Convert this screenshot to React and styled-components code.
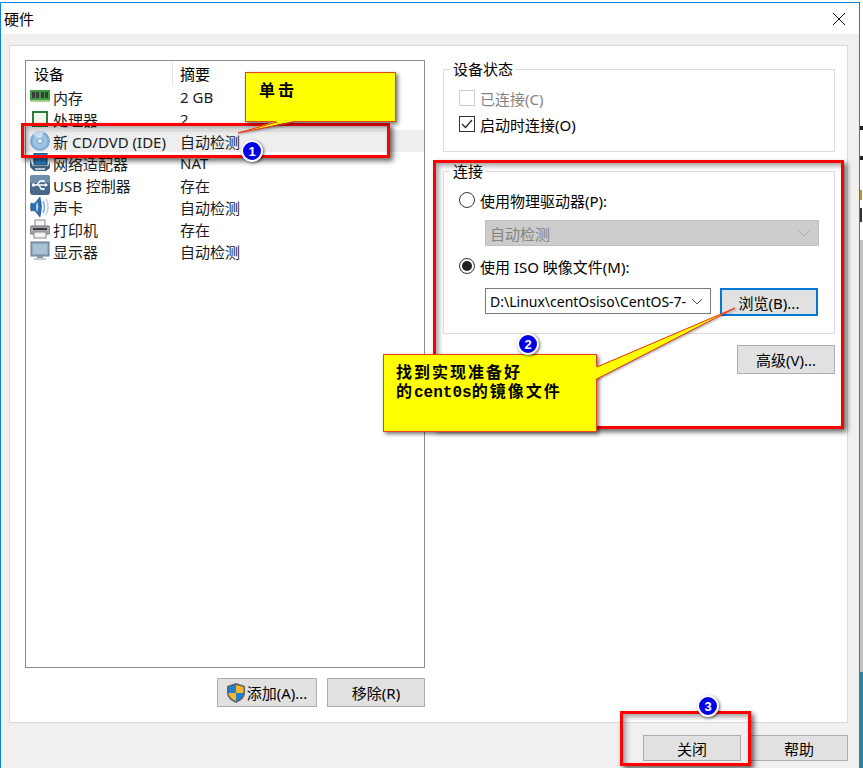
import React from 'react';
import styled, { createGlobalStyle } from 'styled-components';

const GlobalStyle = createGlobalStyle`
  html, body { margin: 0; padding: 0; background: #fff; }
  body {
    font-family: "Noto Sans", "Noto Sans CJK SC", sans-serif;
    font-size: 15px;
    color: #000;
  }
  * { box-sizing: border-box; }
`;

const Page = styled.div`
  position: relative;
  display: flex;
  width: 863px;
  height: 768px;
  padding-top: 2px;
  overflow: hidden;
  background: #fff;
`;

const Window = styled.div`
  display: flex;
  flex-direction: column;
  width: 860px;
  height: 766px;
  border: 1px solid #0a84e0;
  border-bottom: 0;
  background: #f0f0f0;
`;

const Backdrop = styled.div`
  flex: 1;
  margin-top: -2px;
  background:
    linear-gradient(#222, #222) 0 126px / 3px 4px no-repeat,
    linear-gradient(#222, #222) 0 156px / 3px 4px no-repeat,
    linear-gradient(#c89030, #c89030) 0 190px / 2px 10px no-repeat,
    linear-gradient(#333, #333) 0 208px / 2px 14px no-repeat,
    linear-gradient(#2a84a0, #2a84a0) 0 672px / 3px 96px no-repeat,
    linear-gradient(#c4c4c4, #c4c4c4) 0 240px / 3px 432px no-repeat;
`;

const TitleBar = styled.div`
  display: flex;
  align-items: center;
  justify-content: space-between;
  height: 31px;
  padding: 0 14px 0 3px;
  background: #fff;
`;

const Panel = styled.div`
  display: flex;
  gap: 18px;
  height: 678px;
  margin: 11px 11px 0 8px;
  padding: 14px 12px 0 15px;
  background: #fff;
  border: 1px solid #d9d9d9;
`;

const LeftColumn = styled.div`
  display: flex;
  flex-direction: column;
  width: 400px;
`;

const RightColumn = styled.div`
  display: flex;
  flex-direction: column;
  width: 392px;
`;

const DeviceList = styled.div`
  height: 608px;
  padding-top: 1px;
  border: 1px solid #8c8c8c;
`;

const HeaderRow = styled.div`
  display: flex;
  height: 24px;
  line-height: 24px;
`;

const HeaderCell = styled.div`
  width: ${p => p.$w}px;
  padding-left: ${p => p.$pad}px;
  border-right: ${p => (p.$last ? 'none' : '1px solid #e5e5e5')};
  flex: ${p => (p.$last ? 1 : 'none')};
`;

const Row = styled.div`
  display: flex;
  align-items: center;
  height: 22px;
  background: ${p => (p.$selected ? '#eeeeee' : 'transparent')};
`;

const NameCell = styled.div`
  display: flex;
  align-items: center;
  gap: 3px;
  width: 147px;
  padding-left: 4px;
  white-space: nowrap;
  color: #1a1a1a;
`;

const SummaryCell = styled.div`
  padding-left: 7px;
  color: #1a1a1a;
`;

const ButtonRow = styled.div`
  display: flex;
  justify-content: flex-end;
  gap: 10px;
  margin-top: 10px;
`;

const Button = styled.button`
  display: flex;
  align-items: center;
  justify-content: center;
  width: 98px;
  height: ${p => p.$h || 29}px;
  padding: 0;
  font: inherit;
  color: #000;
  background: #e1e1e1;
  border: ${p => (p.$focus ? '2px solid #0078d7' : '1px solid #adadad')};
`;

const AddButton = styled(Button)`
  width: 100px;
  gap: 2px;
`;

const AdvancedButton = styled(Button)`
  align-self: flex-end;
  margin-top: 11px;
`;

const Group = styled.fieldset`
  margin: ${p => p.$top || 0}px 0 0;
  padding: 10px 15px 17px;
  border: 1px solid #dcdcdc;
  min-width: 0;
`;

const Legend = styled.legend`
  margin-left: -9px;
  padding: 0 3px;
  line-height: 18px;
`;

const OptionRow = styled.div`
  display: flex;
  align-items: center;
  gap: 5px;
  height: 20px;
  margin-top: ${p => p.$top || 0}px;
  color: ${p => (p.$disabled ? '#838383' : '#000')};
`;

const CheckBox = styled.span`
  display: flex;
  align-items: center;
  justify-content: center;
  width: 16px;
  height: 16px;
  background: #fff;
  border: 1px solid ${p => (p.$disabled ? '#cccccc' : '#333')};
`;

const Radio = styled.span`
  display: flex;
  align-items: center;
  justify-content: center;
  width: 16px;
  height: 16px;
  border: 1px solid #333;
  border-radius: 50%;
  background: #fff;
`;

const RadioDot = styled.span`
  width: 10px;
  height: 10px;
  border-radius: 50%;
  background: #222;
`;

const DriveSelect = styled.div`
  display: flex;
  align-items: center;
  justify-content: space-between;
  width: 334px;
  height: 26px;
  margin: 10px 0 0 26px;
  padding: 0 8px 0 4px;
  background: #cccccc;
  border: 1px solid #bfbfbf;
  color: #838383;
`;

const PathRow = styled.div`
  display: flex;
  gap: 9px;
  margin: 12px 0 0 26px;
`;

const PathSelect = styled.div`
  display: flex;
  align-items: center;
  justify-content: space-between;
  width: 226px;
  height: 26px;
  padding: 0 7px 0 4px;
  background: #fff;
  border: 1px solid #7a7a7a;
  font-size: 14px;
  white-space: nowrap;
`;

const Footer = styled.div`
  display: flex;
  justify-content: flex-end;
  gap: 9px;
  margin: 12px 11px 0 0;
`;

/* annotations drawn over the dialog */
const RedFrame = styled.div`
  position: absolute;
  left: ${p => p.$x}px;
  top: ${p => p.$y}px;
  width: ${p => p.$w}px;
  height: ${p => p.$h}px;
  border: 3px solid #f00;
  box-shadow: 3px 3px 5px rgba(0, 0, 0, 0.6), inset 3px 3px 5px rgba(0, 0, 0, 0.35);
  pointer-events: none;
`;

const Callout = styled.div`
  position: absolute;
  left: ${p => p.$x}px;
  top: ${p => p.$y}px;
  width: ${p => p.$w}px;
  height: ${p => p.$h}px;
  padding: ${p => p.$pad};
  background: #ffff00;
  border: 1px solid #e8401a;
  box-shadow: 2px 2px 4px rgba(0, 0, 0, 0.55);
  font-family: "Noto Sans CJK SC", sans-serif;
  font-weight: 700;
  font-size: 16px;
  line-height: 19px;
  letter-spacing: ${p => p.$spacing}px;
  white-space: nowrap;
`;

const MonoText = styled.span`
  font-family: "Liberation Mono", monospace;
  font-size: 16px;
  letter-spacing: 0;
`;

const Tail = styled.svg`
  position: absolute;
  left: 0;
  top: 0;
  filter: drop-shadow(1px 1px 1px rgba(0, 0, 0, 0.35));
  pointer-events: none;
`;

const Badge = styled.div`
  position: absolute;
  left: ${p => p.$x - 11}px;
  top: ${p => p.$y - 11}px;
  display: flex;
  align-items: center;
  justify-content: center;
  width: 22px;
  height: 22px;
  border-radius: 50%;
  background: #0000e6;
  border: 2px solid #fff;
  box-shadow: 1px 1px 3px rgba(0, 0, 0, 0.6);
  color: #fff;
  font-family: "Liberation Sans", sans-serif;
  font-weight: 700;
  font-size: 13px;
`;

const IconBox = styled.svg`
  flex: none;
  display: block;
`;

const Icon = ({ children }) => (
  <IconBox width="20" height="20" viewBox="0 0 20 20">{children}</IconBox>
);

const RamIcon = () => (
  <Icon>
    <rect x="0" y="3" width="20" height="10" fill="#3f9a3f" />
    <rect x="0" y="13" width="20" height="2" fill="#a8cf90" />
    <rect x="2" y="5" width="3" height="6" fill="#3a3a3a" />
    <rect x="6" y="5" width="3" height="6" fill="#3a3a3a" />
    <rect x="11" y="5" width="3" height="6" fill="#3a3a3a" />
    <rect x="15" y="5" width="3" height="6" fill="#3a3a3a" />
  </Icon>
);

const CpuIcon = () => (
  <Icon>
    <rect x="3" y="3" width="14" height="14" fill="#eef5ea" stroke="#2f7d3a" strokeWidth="2" />
  </Icon>
);

const DiscIcon = () => (
  <Icon>
    <circle cx="10" cy="10" r="10" fill="#7fabd2" />
    <circle cx="10" cy="10" r="7.5" fill="#9cc3e2" />
    <path d="M10 10 L3 3 A10 10 0 0 1 14 1 Z" fill="#c6deef" />
    <circle cx="10" cy="10" r="2.5" fill="#eaf3fa" stroke="#6d9cc4" />
  </Icon>
);

const NetworkIcon = () => (
  <Icon>
    <rect x="4" y="0" width="13" height="12" fill="#2d7fc4" stroke="#1d3f66" />
    <path d="M0 7 L3 13 H18 L20 9 V15 L16 18 H4 L0 14 Z" fill="#3f5f7c" />
    <rect x="5" y="15" width="10" height="2" fill="#b8c8d8" />
  </Icon>
);

const UsbIcon = () => (
  <Icon>
    <rect x="0" y="0" width="20" height="20" rx="3" fill="#47688a" />
    <path d="M0 3 Q0 0 3 0 H17 Q20 0 20 3 V8 H0 Z" fill="#6f8ca8" />
    <path d="M3 10 H16 M7 10 L10 6 H13 M9 10 L11 14 H13" stroke="#fff" strokeWidth="1.4" fill="none" />
    <circle cx="3.5" cy="10" r="1.8" fill="#fff" />
    <path d="M15 8 L18 10 L15 12 Z" fill="#fff" />
    <rect x="12.5" y="5" width="2" height="2" fill="#fff" />
    <circle cx="13.5" cy="14" r="1.2" fill="#fff" />
  </Icon>
);

const SpeakerIcon = () => (
  <Icon>
    <path d="M1 6 Q3 7 5 6 L10 0 Q13 10 10 20 L5 14 Q3 13 1 14 Q0 10 1 6 Z" fill="#2f6fb4" stroke="#1f4a7c" strokeWidth="0.6" />
    <path d="M7 5 Q9.5 10 7 15 Q5 10 7 5 Z" fill="#bcd8f0" />
    <path d="M13 4 Q16 10 13 16" stroke="#7aa8d8" strokeWidth="1.6" fill="none" />
    <path d="M16 2 Q20 10 16 18" stroke="#b4cfe8" strokeWidth="1.4" fill="none" />
  </Icon>
);

const PrinterIcon = () => (
  <Icon>
    <rect x="5" y="1" width="10" height="7" fill="#f4f4f4" stroke="#8a8a8a" />
    <rect x="0" y="7" width="20" height="8" rx="1.5" fill="#a4a8ac" stroke="#6c7074" />
    <rect x="3" y="9" width="14" height="2" fill="#3a3a3a" />
    <rect x="4" y="13" width="12" height="6" fill="#f4f4f4" stroke="#8a8a8a" />
  </Icon>
);

const MonitorIcon = () => (
  <Icon>
    <rect x="1" y="1" width="18" height="14" fill="#8fa8bc" stroke="#62798c" />
    <rect x="3" y="3" width="14" height="10" fill="#a7c0d2" />
    <rect x="7" y="15" width="6" height="2" fill="#8b9aa6" />
    <rect x="4" y="17" width="12" height="2" fill="#c0c8ce" />
  </Icon>
);

const ShieldIcon = () => (
  <IconBox width="18" height="20" viewBox="0 0 18 20">
    <path d="M9 0 L18 3 V10 Q18 16 9 20 Q0 16 0 10 V3 Z" fill="#5a6470" />
    <path d="M9 2 V10 H1.5 V4 Z" fill="#1f7fd0" />
    <path d="M9 2 L16.5 4 V10 H9 Z" fill="#f7b92a" />
    <path d="M1.5 10 H9 V18 Q2.5 15.5 1.5 10 Z" fill="#f7b92a" />
    <path d="M9 10 H16.5 Q15.5 15.5 9 18 Z" fill="#1f7fd0" />
  </IconBox>
);

const Chevron = ({ color }) => (
  <svg width="12" height="7" viewBox="0 0 12 7">
    <path d="M1 1 L6 6 L11 1" fill="none" stroke={color} strokeWidth="1" />
  </svg>
);

const devices = [
  { name: '内存', summary: '2 GB', icon: RamIcon },
  { name: '处理器', summary: '2', icon: CpuIcon },
  { name: '新 CD/DVD (IDE)', summary: '自动检测', icon: DiscIcon, selected: true },
  { name: '网络适配器', summary: 'NAT', icon: NetworkIcon },
  { name: 'USB 控制器', summary: '存在', icon: UsbIcon },
  { name: '声卡', summary: '自动检测', icon: SpeakerIcon },
  { name: '打印机', summary: '存在', icon: PrinterIcon },
  { name: '显示器', summary: '自动检测', icon: MonitorIcon },
];

const App = () => (
  <Page>
    <GlobalStyle />
    <Window>
      <TitleBar>
        <span>硬件</span>
        <svg width="12" height="12" viewBox="0 0 12 12">
          <path d="M0 0 L12 12 M12 0 L0 12" stroke="#111" strokeWidth="1" />
        </svg>
      </TitleBar>
      <Panel>
        <LeftColumn>
          <DeviceList>
            <HeaderRow>
              <HeaderCell $w={147} $pad={8}>设备</HeaderCell>
              <HeaderCell $last $pad={7}>摘要</HeaderCell>
            </HeaderRow>
            {devices.map(d => (
              <Row key={d.name} $selected={d.selected}>
                <NameCell>
                  <d.icon />
                  {d.name}
                </NameCell>
                <SummaryCell>{d.summary}</SummaryCell>
              </Row>
            ))}
          </DeviceList>
          <ButtonRow>
            <AddButton><ShieldIcon />添加(A)...</AddButton>
            <Button>移除(R)</Button>
          </ButtonRow>
        </LeftColumn>
        <RightColumn>
          <Group>
            <Legend>设备状态</Legend>
            <OptionRow $disabled>
              <CheckBox $disabled />
              已连接(C)
            </OptionRow>
            <OptionRow $top={6}>
              <CheckBox>
                <svg width="12" height="10" viewBox="0 0 12 10">
                  <path d="M1 5 L4.5 8.5 L11 1" fill="none" stroke="#222" strokeWidth="1.2" />
                </svg>
              </CheckBox>
              启动时连接(O)
            </OptionRow>
          </Group>
          <Group $top={10}>
            <Legend>连接</Legend>
            <OptionRow>
              <Radio />
              使用物理驱动器(P):
            </OptionRow>
            <DriveSelect>
              自动检测
              <Chevron color="#a8a8a8" />
            </DriveSelect>
            <OptionRow $top={10}>
              <Radio><RadioDot /></Radio>
              使用 ISO 映像文件(M):
            </OptionRow>
            <PathRow>
              <PathSelect>
                D:\Linux\centOsiso\CentOS-7-
                <Chevron color="#555" />
              </PathSelect>
              <Button $h={28} $focus>浏览(B)...</Button>
            </PathRow>
          </Group>
          <AdvancedButton>高级(V)...</AdvancedButton>
        </RightColumn>
      </Panel>
      <Footer>
        <Button $h={26}>关闭</Button>
        <Button $h={26}>帮助</Button>
      </Footer>
    </Window>
    <Backdrop />

    <RedFrame $x={21} $y={123} $w={369} $h={35} />
    <RedFrame $x={433} $y={160} $w={411} $h={269} />
    <RedFrame $x={620} $y={711} $w={131} $h={55} />

    <Callout $x={245} $y={72} $w={151} $h={50} $pad="7px 0 0 13px" $spacing={3}>单击</Callout>
    <Callout $x={383} $y={354} $w={214} $h={78} $pad="7px 0 0 12px" $spacing={2}>
      找到实现准备好
      <br />
      的<MonoText>cent0s</MonoText>的镜像文件
    </Callout>
    <Tail width="863" height="768" viewBox="0 0 863 768">
      <polygon points="277,121 294,121 238,133" fill="#ffff00" />
      <polyline points="277,122 238,133 294,122" fill="none" stroke="#e8301a" strokeWidth="1" />
      <polygon points="596,367 735,308 596,379" fill="#ffff00" />
      <polyline points="597,367 735,308 597,379" fill="none" stroke="#e8301a" strokeWidth="1" />
    </Tail>

    <Badge $x={252} $y={151}>1</Badge>
    <Badge $x={528} $y={344}>2</Badge>
    <Badge $x={708} $y={706}>3</Badge>
  </Page>
);

export default App;
